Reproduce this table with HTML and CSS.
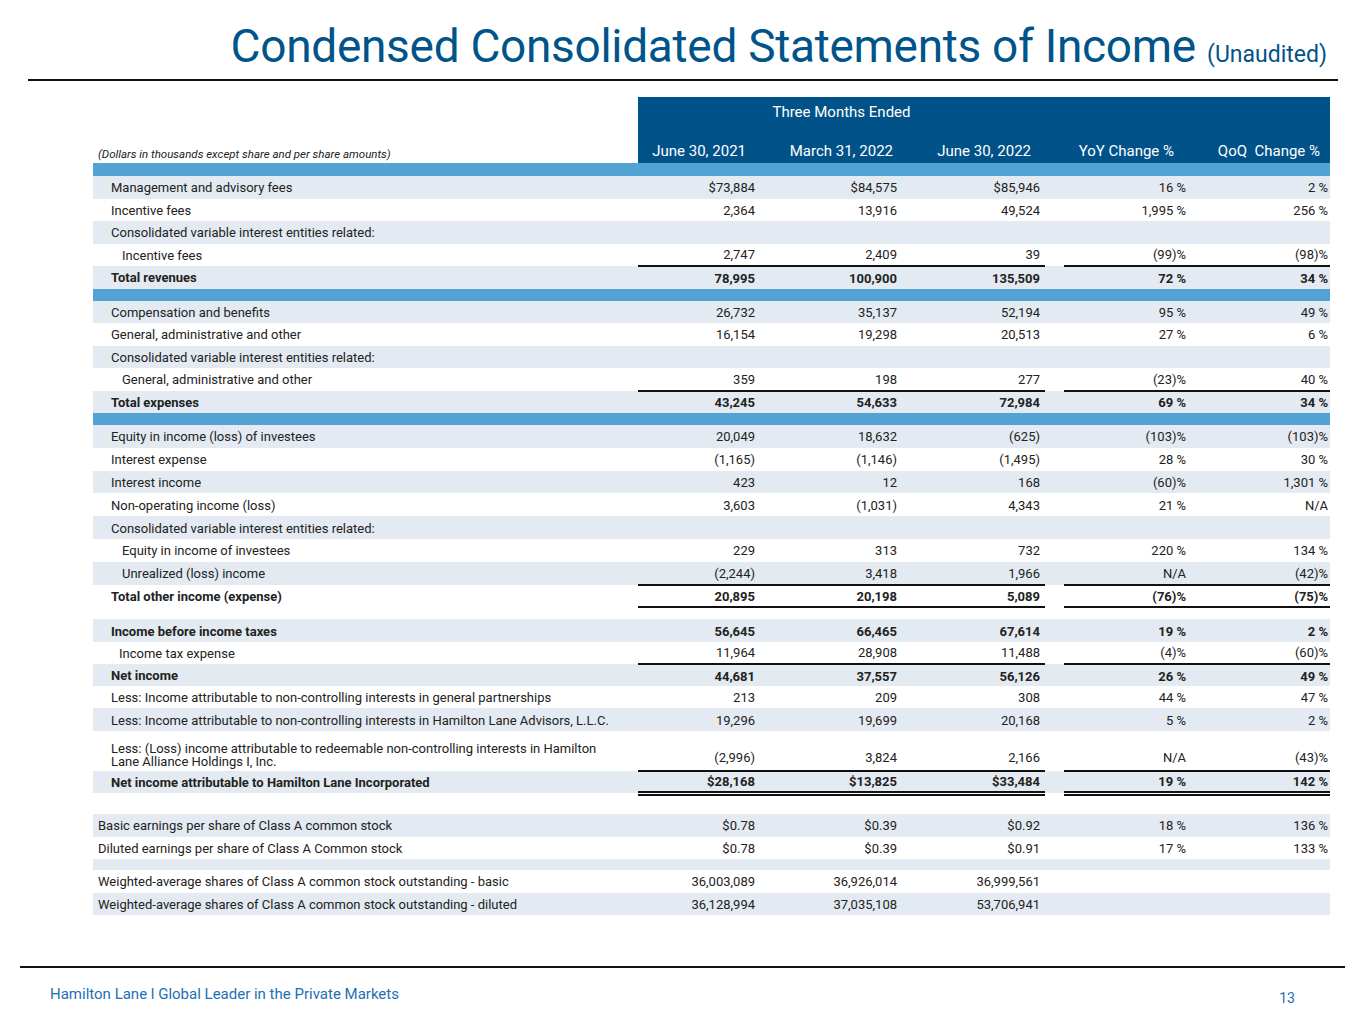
FILE: index.html
```html
<!DOCTYPE html>
<html lang="en">
<head>
<meta charset="utf-8">
<title>Condensed Consolidated Statements of Income</title>
<link rel="stylesheet" href="styles.css">
</head>
<body>
<div class="slide">
  <header class="title-bar">
    <h1 class="title">Condensed Consolidated Statements of Income <span class="sub">(Unaudited)</span></h1>
  </header>

  <table class="fin">
    <colgroup>
      <col class="c-label"><col class="c-1"><col class="c-2"><col class="c-3"><col class="c-gap"><col class="c-4"><col class="c-5">
    </colgroup>
    <thead>
      <tr class="h1">
        <td class="blank"></td>
        <th colspan="3" class="hd center">Three Months Ended</th>
        <th colspan="3" class="hd"></th>
      </tr>
      <tr class="h2">
        <td class="note">(Dollars in thousands except share and per share amounts)</td>
        <th class="hd r p1">June 30, 2021</th>
        <th class="hd r p2">March 31, 2022</th>
        <th class="hd r p3">June 30, 2022</th>
        <th class="hd"></th>
        <th class="hd r p4">YoY Change %</th>
        <th class="hd r p5">QoQ&nbsp; Change %</th>
      </tr>
    </thead>
    <tbody>
      <tr class="band b1"><td colspan="7"></td></tr>

      <tr class="s"><td class="l1">Management and advisory fees</td><td class="n">$73,884</td><td class="n">$84,575</td><td class="n">$85,946</td><td></td><td class="n p">16&nbsp;%</td><td class="n q">2&nbsp;%</td></tr>
      <tr><td class="l1">Incentive fees</td><td class="n">2,364</td><td class="n">13,916</td><td class="n">49,524</td><td></td><td class="n p">1,995&nbsp;%</td><td class="n q">256&nbsp;%</td></tr>
      <tr class="s"><td class="l1">Consolidated variable interest entities related:</td><td></td><td></td><td></td><td></td><td></td><td></td></tr>
      <tr><td class="l2">Incentive fees</td><td class="n">2,747</td><td class="n">2,409</td><td class="n">39</td><td></td><td class="n p">(99)%</td><td class="n q">(98)%</td></tr>
      <tr class="s t top"><td class="l1">Total revenues</td><td class="n">78,995</td><td class="n">100,900</td><td class="n">135,509</td><td class="gap"></td><td class="n p">72&nbsp;%</td><td class="n q">34&nbsp;%</td></tr>

      <tr class="band"><td colspan="7"></td></tr>

      <tr class="s"><td class="l1">Compensation and benefits</td><td class="n">26,732</td><td class="n">35,137</td><td class="n">52,194</td><td></td><td class="n p">95&nbsp;%</td><td class="n q">49&nbsp;%</td></tr>
      <tr><td class="l1">General, administrative and other</td><td class="n">16,154</td><td class="n">19,298</td><td class="n">20,513</td><td></td><td class="n p">27&nbsp;%</td><td class="n q">6&nbsp;%</td></tr>
      <tr class="s"><td class="l1">Consolidated variable interest entities related:</td><td></td><td></td><td></td><td></td><td></td><td></td></tr>
      <tr><td class="l2">General, administrative and other</td><td class="n">359</td><td class="n">198</td><td class="n">277</td><td></td><td class="n p">(23)%</td><td class="n q">40&nbsp;%</td></tr>
      <tr class="s t top"><td class="l1">Total expenses</td><td class="n">43,245</td><td class="n">54,633</td><td class="n">72,984</td><td class="gap"></td><td class="n p">69&nbsp;%</td><td class="n q">34&nbsp;%</td></tr>

      <tr class="band"><td colspan="7"></td></tr>

      <tr class="s r3"><td class="l1">Equity in income (loss) of investees</td><td class="n">20,049</td><td class="n">18,632</td><td class="n">(625)</td><td></td><td class="n p">(103)%</td><td class="n q">(103)%</td></tr>
      <tr class="r3"><td class="l1">Interest expense</td><td class="n">(1,165)</td><td class="n">(1,146)</td><td class="n">(1,495)</td><td></td><td class="n p">28&nbsp;%</td><td class="n q">30&nbsp;%</td></tr>
      <tr class="s r3"><td class="l1">Interest income</td><td class="n">423</td><td class="n">12</td><td class="n">168</td><td></td><td class="n p">(60)%</td><td class="n q">1,301&nbsp;%</td></tr>
      <tr class="r3"><td class="l1">Non-operating income (loss)</td><td class="n">3,603</td><td class="n">(1,031)</td><td class="n">4,343</td><td></td><td class="n p">21&nbsp;%</td><td class="n q">N/A</td></tr>
      <tr class="s r3"><td class="l1">Consolidated variable interest entities related:</td><td></td><td></td><td></td><td></td><td></td><td></td></tr>
      <tr class="r3"><td class="l2">Equity in income of investees</td><td class="n">229</td><td class="n">313</td><td class="n">732</td><td></td><td class="n p">220&nbsp;%</td><td class="n q">134&nbsp;%</td></tr>
      <tr class="s r3"><td class="l2">Unrealized (loss) income</td><td class="n">(2,244)</td><td class="n">3,418</td><td class="n">1,966</td><td></td><td class="n p">N/A</td><td class="n q">(42)%</td></tr>
      <tr class="t top bottom r3"><td class="l1">Total other income (expense)</td><td class="n">20,895</td><td class="n">20,198</td><td class="n">5,089</td><td class="gap"></td><td class="n p">(76)%</td><td class="n q">(75)%</td></tr>

      <tr class="spacer"><td colspan="7"></td></tr>

      <tr class="s t"><td class="l1">Income before income taxes</td><td class="n">56,645</td><td class="n">66,465</td><td class="n">67,614</td><td></td><td class="n p">19&nbsp;%</td><td class="n q">2&nbsp;%</td></tr>
      <tr class="r2"><td class="l3">Income tax expense</td><td class="n">11,964</td><td class="n">28,908</td><td class="n">11,488</td><td></td><td class="n p">(4)%</td><td class="n q">(60)%</td></tr>
      <tr class="s t top r2"><td class="l1">Net income</td><td class="n">44,681</td><td class="n">37,557</td><td class="n">56,126</td><td class="gap"></td><td class="n p">26&nbsp;%</td><td class="n q">49&nbsp;%</td></tr>
      <tr class="r2"><td class="l1">Less: Income attributable to non-controlling interests in general partnerships</td><td class="n">213</td><td class="n">209</td><td class="n">308</td><td></td><td class="n p">44&nbsp;%</td><td class="n q">47&nbsp;%</td></tr>
      <tr class="s r2"><td class="l1">Less: Income attributable to non-controlling interests in Hamilton Lane Advisors, L.L.C.</td><td class="n">19,296</td><td class="n">19,699</td><td class="n">20,168</td><td></td><td class="n p">5&nbsp;%</td><td class="n q">2&nbsp;%</td></tr>
      <tr class="two"><td class="l1 wrap">Less: (Loss) income attributable to redeemable non-controlling interests in Hamilton<br>Lane Alliance Holdings I, Inc.</td><td class="n">(2,996)</td><td class="n">3,824</td><td class="n">2,166</td><td></td><td class="n p">N/A</td><td class="n q">(43)%</td></tr>
      <tr class="s t top dbl"><td class="l1">Net income attributable to Hamilton Lane Incorporated</td><td class="n">$28,168</td><td class="n">$13,825</td><td class="n">$33,484</td><td class="gap"></td><td class="n p">19&nbsp;%</td><td class="n q">142&nbsp;%</td></tr>

      <tr class="spacer2"><td colspan="7"></td></tr>

      <tr class="s"><td class="l0">Basic earnings per share of Class A common stock</td><td class="n">$0.78</td><td class="n">$0.39</td><td class="n">$0.92</td><td></td><td class="n p">18&nbsp;%</td><td class="n q">136&nbsp;%</td></tr>
      <tr><td class="l0">Diluted earnings per share of Class A Common stock</td><td class="n">$0.78</td><td class="n">$0.39</td><td class="n">$0.91</td><td></td><td class="n p">17&nbsp;%</td><td class="n q">133&nbsp;%</td></tr>
      <tr class="s thin"><td colspan="7"></td></tr>
      <tr><td class="l0">Weighted-average shares of Class A common stock outstanding - basic</td><td class="n">36,003,089</td><td class="n">36,926,014</td><td class="n">36,999,561</td><td></td><td></td><td></td></tr>
      <tr class="s"><td class="l0">Weighted-average shares of Class A common stock outstanding - diluted</td><td class="n">36,128,994</td><td class="n">37,035,108</td><td class="n">53,706,941</td><td></td><td></td><td></td></tr>
    </tbody>
  </table>

  <footer class="foot">
    <span class="brand">Hamilton Lane l Global Leader in the Private Markets</span>
    <span class="page">13</span>
  </footer>
</div>
</body>
</html>
```

FILE: styles.css
```css
* { box-sizing: border-box; }

html, body {
  margin: 0;
  padding: 0;
  background: #ffffff;
}

body {
  font-family: Roboto, "Liberation Sans", Arial, sans-serif;
  color: #222222;
}

.slide {
  width: 1365px;
  height: 1024px;
  position: relative;
  overflow: hidden;
}

/* Title */
.title-bar {
  margin: 0 27px 0 28px;
  height: 81px;
  border-bottom: 2px solid #111111;
  display: flex;
  justify-content: flex-end;
  align-items: flex-end;
  padding-right: 11px;
}

.title {
  margin: 0 0 -4px 0;
  font-weight: 400;
  font-size: 46px;
  letter-spacing: -0.3px;
  line-height: 56px;
  color: #00548a;
  white-space: nowrap;
}

.title .sub {
  font-size: 23px;
  letter-spacing: 0;
}

/* Table */
.fin {
  margin: 16px 0 0 93px;
  width: 1237px;
  border-collapse: collapse;
  table-layout: fixed;
  font-size: 13px;
}

.c-label { width: 545px; }
.c-1 { width: 122px; }
.c-2 { width: 142px; }
.c-3 { width: 143px; }
.c-gap { width: 19px; }
.c-4 { width: 126px; }
.c-5 { width: 140px; }

.fin td, .fin th {
  padding: 0;
  white-space: nowrap;
  font-weight: 400;
}

.fin tbody td { padding-top: 1px; }

.fin tr { height: 22.5px; }

.h1 { height: 31px !important; }
.h2 { height: 35px !important; }

.hd {
  background: #02528a;
  color: #ffffff;
  font-size: 15px;
}

.hd.center {
  text-align: center;
  vertical-align: top;
  padding-top: 6px;
}

.h2 .hd {
  vertical-align: bottom;
  padding-bottom: 3px;
  line-height: 18px;
}

.hd.r { text-align: right; }
.hd.p1 { padding-right: 14px; }
.hd.p2 { padding-right: 9px; }
.hd.p3 { padding-right: 14px; }
.hd.p4 { padding-right: 16px; }
.hd.p5 { padding-right: 10px; }

.note {
  font-style: italic;
  font-size: 11.5px;
  vertical-align: bottom;
  padding: 0 0 2px 5px !important;
  line-height: 14px;
}

.band { height: 12px !important; }
.band.b1 { height: 13px !important; }
.band td { background: #52a3d3; padding: 0 !important; }

.s td { background: #e3eaf1; }

.thin { height: 11px !important; }
.thin td { padding: 0 !important; }

.spacer { height: 12px !important; }
.spacer2 { height: 21px !important; }
.spacer td, .spacer2 td { padding: 0 !important; }

.r2 { height: 22.2px !important; }
.r3 { height: 22.8px !important; }

.n {
  text-align: right;
  padding-right: 5px !important;
}

.n.p { padding-right: 4px !important; }
.n.q { padding-right: 2px !important; }

.l0 { padding-left: 5px !important; }
.l1 { padding-left: 18px !important; }
.l2 { padding-left: 29px !important; }
.l3 { padding-left: 26px !important; }

.t td { font-weight: 700; }

.top td:not(:first-child):not(.gap) {
  border-top: 2px solid #111111;
}

.bottom td:not(:first-child):not(.gap) {
  border-bottom: 2px solid #111111;
}

.dbl td:not(:first-child):not(.gap) {
  border-bottom: 5px double #111111;
}

.two { height: 40px !important; }
.two td { vertical-align: bottom; padding-bottom: 5px; }
.two td.wrap {
  white-space: normal;
  line-height: 13px;
  padding-bottom: 3px;
}

/* Footer */
.foot {
  position: absolute;
  left: 20px;
  right: 20px;
  top: 966px;
  border-top: 2px solid #111111;
  display: flex;
  justify-content: space-between;
  align-items: flex-start;
  padding: 17px 50px 0 30px;
  font-size: 15px;
  color: #1e6fb4;
}

.foot .page {
  padding-top: 5px;
  font-size: 14px;
}
```
